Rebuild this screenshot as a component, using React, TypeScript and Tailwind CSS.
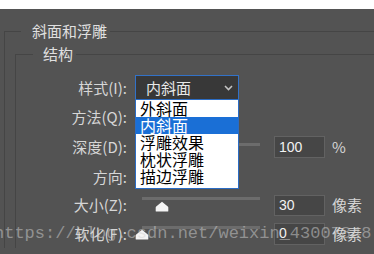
import type { ReactNode } from "react";

const LABEL = "text-[15px] leading-[20px] text-[#d6d6d6]";

function Row({ label, h, children }: { label: string; h: string; children?: ReactNode }) {
  return (
    <div className={`flex items-center ${h}`}>
      <div className={`w-[111px] text-right whitespace-nowrap ${LABEL}`}>{label}</div>
      <div className="ml-[8px] flex items-center">{children}</div>
    </div>
  );
}

function Thumb({ className }: { className: string }) {
  return (
    <svg className={`absolute ${className}`} width="14" height="11" viewBox="0 0 14 11">
      <path
        d="M7 0.8 L12.8 5.6 Q13.3 6 13.3 6.6 L13.3 10 Q13.3 10.6 12.7 10.6 L1.3 10.6 Q0.7 10.6 0.7 10 L0.7 6.6 Q0.7 6 1.2 5.6 Z"
        fill="#f4f4f4"
      />
    </svg>
  );
}

function Slider({ extra, thumb }: { extra?: string; thumb?: ReactNode }) {
  return (
    <div className={`relative w-[131px] h-[16px] ${extra ?? ""}`}>
      <div className="ml-[7px] w-[118px] h-[3px] bg-[#6c6c6c]" />
      {thumb}
    </div>
  );
}

function NumBox({ value, h }: { value: string; h: string }) {
  return (
    <div
      className={`ml-[8px] w-[51px] ${h} border border-[#626262] bg-[#464646] pl-[4px] flex items-center text-[14px] text-[#f2f2f2] font-['Liberation_Sans',sans-serif]`}
    >
      {value}
    </div>
  );
}

function Unit({ children }: { children: ReactNode }) {
  return <div className={`ml-[7px] ${LABEL}`}>{children}</div>;
}

const OPTIONS = ["外斜面", "内斜面", "浮雕效果", "枕状浮雕", "描边浮雕"];

function Select() {
  return (
    <div className="relative w-[104px] h-[25px] border border-[#3272c8] bg-[#383838] flex items-center justify-between pl-[10px] pr-[5px]">
      <span className="text-[15px] leading-[20px] text-[#e8e8e8]">内斜面</span>
      <svg width="9" height="6" viewBox="0 0 9 6">
        <path d="M1 1 L4.5 4.6 L8 1" fill="none" stroke="#c4c4c4" strokeWidth="1.5" />
      </svg>
      <div className="absolute left-[-1px] top-full z-10 w-[104px] bg-white border border-[#2b6cc4] pb-[3px]">
        {OPTIONS.map((o) => (
          <div
            key={o}
            className={`h-[17px] pl-[4px] text-[16px] leading-[17px] whitespace-nowrap ${
              o === "内斜面" ? "bg-[#1a6fd6] text-white" : "text-black"
            }`}
          >
            {o}
          </div>
        ))}
      </div>
    </div>
  );
}

export default function App() {
  return (
    <div className="relative w-[374px] h-[254px] overflow-hidden bg-[#535353] font-['Noto_Sans_CJK_SC',sans-serif]">
      <div className="h-[9px] bg-white" />
      <fieldset className="ml-[4px] mt-[12px] border-t border-l border-[#454545]">
        <legend className="ml-[16px] pl-[11px] pr-[3px] text-[15px] leading-[20px] text-[#e0e0e0]">
          斜面和浮雕
        </legend>
        <fieldset className="ml-[10px] mt-[3px] border-t border-l border-[#454545]">
          <legend className="ml-[17px] pl-[10px] pr-[3px] text-[15px] leading-[20px] text-[#e0e0e0]">
            结构
          </legend>
          <div className="pt-[9px] flex flex-col">
            <Row label="样式(I):" h="h-[29px]">
              <Select />
            </Row>
            <Row label="方法(Q):" h="h-[30px]" />
            <Row label="深度(D):" h="h-[30px]">
              <Slider extra="mt-[8px]" />
              <NumBox value="100" h="h-[22px]" />
              <Unit>%</Unit>
            </Row>
            <Row label="方向:" h="h-[29px]" />
            <Row label="大小(Z):" h="h-[28px]">
              <Slider thumb={<Thumb className="left-[20px] top-[4px]" />} />
              <NumBox value="30" h="h-[21px]" />
              <Unit>像素</Unit>
            </Row>
            <Row label="软化(F):" h="h-[29px]">
              <Slider thumb={<Thumb className="left-0 top-[3px]" />} />
              <NumBox value="0" h="h-[22px]" />
              <Unit>像素</Unit>
            </Row>
          </div>
        </fieldset>
      </fieldset>
      {/* csdn watermark baked into the screenshot */}
      <div className="pointer-events-none absolute left-[-6px] top-[224px] whitespace-nowrap text-[17px] leading-[20px] text-[rgba(210,210,210,0.5)] font-['Liberation_Mono',monospace]">
        https://blog.csdn.net/weixin_43007848
      </div>
    </div>
  );
}
